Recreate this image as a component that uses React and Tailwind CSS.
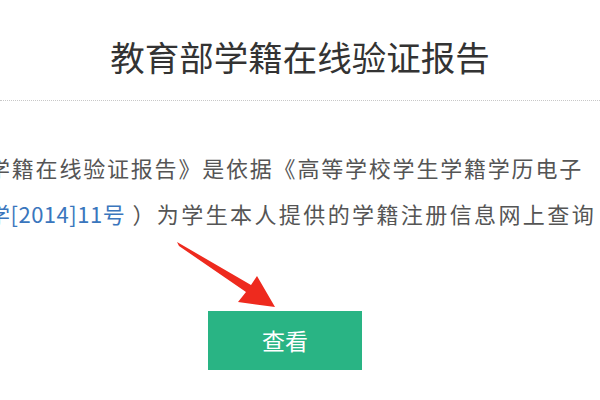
import React from 'react'

const cjk = { fontFamily: '"Microsoft YaHei", "Noto Sans CJK SC", sans-serif' }

function Arrow() {
  // red pointer arrow sitting over the page, pointing at the button
  return (
    <svg className="absolute left-0 top-0" width="600" height="400" viewBox="0 0 600 400">
      <polygon
        points="177,242 251,285 257,276 275,307 238,302 246,292 179,246"
        fill="#ee2a1e"
      />
    </svg>
  )
}

export default function App() {
  return (
    <div className="relative w-[600px] h-[400px] overflow-hidden bg-white" style={cjk}>
      <div className="pt-[32px] pb-[20px] text-center text-[34.5px] leading-[48px] text-[#333]">
        教育部学籍在线验证报告
      </div>
      <div className="border-t border-dotted border-[#c8c8c8]" />

      <div className="mt-[43px] text-[22px] leading-[46px] text-[#555] tracking-[1.8px] whitespace-nowrap">
        <div className="ml-[-12px]">学籍在线验证报告》是依据《高等学校学生学籍学历电子</div>
        <div className="ml-[-12px]">
          <span className="text-[#3a76bd] tracking-[0.5px]">学[2014]11号</span>
          <span className="tracking-[2.4px]"> ）为学生本人提供的学籍注册信息网上查询</span>
        </div>
      </div>

      <div className="mt-[75px] ml-[208px] w-[154px] h-[59px] flex items-center justify-center bg-[#29b484] text-white text-[23px]">
        查看
      </div>

      <Arrow />
    </div>
  )
}
